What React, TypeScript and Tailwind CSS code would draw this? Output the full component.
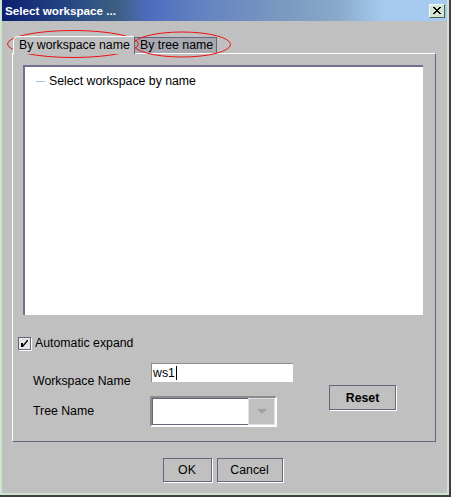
const font = { fontFamily: '"Liberation Sans", Arial, sans-serif' }

function MetalButton({ label, bold, className }: { label: string; bold?: boolean; className: string }) {
  return (
    <div
      className={`flex items-center justify-center border border-[#666680] bg-[#c0c0c0] shadow-[1px_1px_0_#ffffff] text-[12.3px] text-black ${bold ? 'font-bold' : ''} ${className}`}
    >
      {label}
    </div>
  )
}

export default function App() {
  return (
    <div className="w-[451px] h-[497px] bg-[#404040] pr-[2px] pb-[2px]" style={font}>
      <div className="w-full h-full flex flex-col bg-[#c0c0c0] border-l-2 border-r-2 border-b-2 border-[#cde5cd]">
        {/* title bar */}
        <div className="h-[21px] flex items-center justify-between pl-[3px] pr-[2px] bg-[linear-gradient(to_right,#0c1f72_0%,#2c4f86_18%,#3d5f82_26%,#4d6cc0_33%,#6482c0_45%,#7a98c0_62%,#88a8c8_75%,#a6caf0_86%,#a6caf0_100%)]">
          <span className="text-white font-bold text-[11.7px] leading-none">Select workspace ...</span>
          <div className="w-[16px] h-[14px] flex items-center justify-center bg-[#d2e4d2] border border-[#f4fbf4] border-r-[#506050] border-b-[#506050]">
            <svg width="10" height="9" viewBox="0 0 10 9">
              <path d="M1 1 L8 8 M2 1 L9 8 M8 1 L1 8 M9 1 L2 8" stroke="#000" strokeWidth="1" />
            </svg>
          </div>
        </div>

        {/* tabs */}
        <div className="relative h-[32px] flex items-end pl-[11px]">
          <div className="relative z-10 h-[18px] w-[122px] flex items-center pl-[5px] whitespace-nowrap bg-[#c0c0c0] border-l border-t border-r border-l-[#ffffff] border-t-[#ffffff] border-r-[#666680] rounded-tl-[5px] -mb-px text-[12.3px] text-black">
            By workspace name
          </div>
          <div className="h-[16px] w-[82px] flex items-center pl-[5px] whitespace-nowrap bg-[#a8a8b0] border-t border-r border-[#666680] text-[12.3px] text-black">
            By tree name
          </div>
          {/* red annotation rings */}
          <svg className="absolute left-[4px] top-[8px]" width="230" height="32" viewBox="0 0 230 32">
            <ellipse cx="67" cy="15" rx="65.5" ry="13.5" fill="none" stroke="#ee1111" strokeWidth="1" />
            <ellipse cx="176" cy="15.5" rx="48.5" ry="12.5" fill="none" stroke="#ee1111" strokeWidth="1" />
          </svg>
        </div>

        {/* panel */}
        <div className="ml-[10px] w-[424px] h-[389px] border-l border-t border-white border-r border-b border-r-[#666680] border-b-[#666680] flex flex-col">
          <div className="ml-[10px] mt-[11px] w-[400px] h-[250px] bg-white border-l-2 border-t-2 border-[#70708a] pl-[11px] pt-[8px]">
            <div className="flex items-center gap-[4px] text-[12.3px] text-black leading-none">
              <div className="w-[9px] h-px bg-[#a8c0dc]" />
              <span>Select workspace by name</span>
            </div>
          </div>

          <div className="mt-[19px] ml-[5px] flex items-center gap-[4px]">
            <div className="w-[13px] h-[13px] border border-[#666680] bg-[#e6e6e6] shadow-[1px_1px_0_#ffffff] flex items-center justify-center">
              <svg width="9" height="9" viewBox="0 0 9 9">
                <path d="M1 4 L1 8 L3 8 L8 2 L8 1 L7 1 L3 6 L3 4 Z" fill="#000" />
              </svg>
            </div>
            <span className="text-[12.3px] text-black">Automatic expand</span>
          </div>

          <div className="mt-[11px] flex items-start">
            <div className="flex flex-col">
              <div className="flex items-start h-[33px]">
                <span className="w-[118px] ml-[20px] mt-[9px] text-[12.3px] text-black">Workspace Name</span>
                <div className="w-[142px] h-[19px] bg-white border-t border-l border-[#8c8c8c] flex items-center pl-[1px] text-[12.3px] text-black">
                  ws1<span className="w-px h-[14px] bg-black ml-[1px]" />
                </div>
              </div>
              <div className="flex items-center h-[31px]">
                <span className="w-[117px] ml-[20px] mb-[2px] text-[12.3px] text-black">Tree Name</span>
                <div className="w-[127px] h-[31px] border-t-2 border-l-2 border-[#8c8c8c] border-r-2 border-b-2 border-r-white border-b-white flex">
                  <div className="flex-1 bg-white border-l border-t border-b border-[#666680] border-t-[#666680]" />
                  <div className="w-[27px] bg-[#c0c0c0] border border-[#e0e0e0] flex items-center justify-center">
                    <svg width="10" height="6" viewBox="0 0 10 6">
                      <path d="M0 0 L10 0 L5 5 Z" fill="#a0a0a0" />
                    </svg>
                  </div>
                </div>
              </div>
            </div>
            <MetalButton label="Reset" bold className="ml-[36px] mt-[22px] w-[67px] h-[25px]" />
          </div>
        </div>

        {/* bottom buttons */}
        <div className="mt-[16px] flex justify-center gap-[5px] pr-[4px]">
          <MetalButton label="OK" className="w-[49px] h-[24px]" />
          <MetalButton label="Cancel" className="w-[66px] h-[24px]" />
        </div>
      </div>
    </div>
  )
}
